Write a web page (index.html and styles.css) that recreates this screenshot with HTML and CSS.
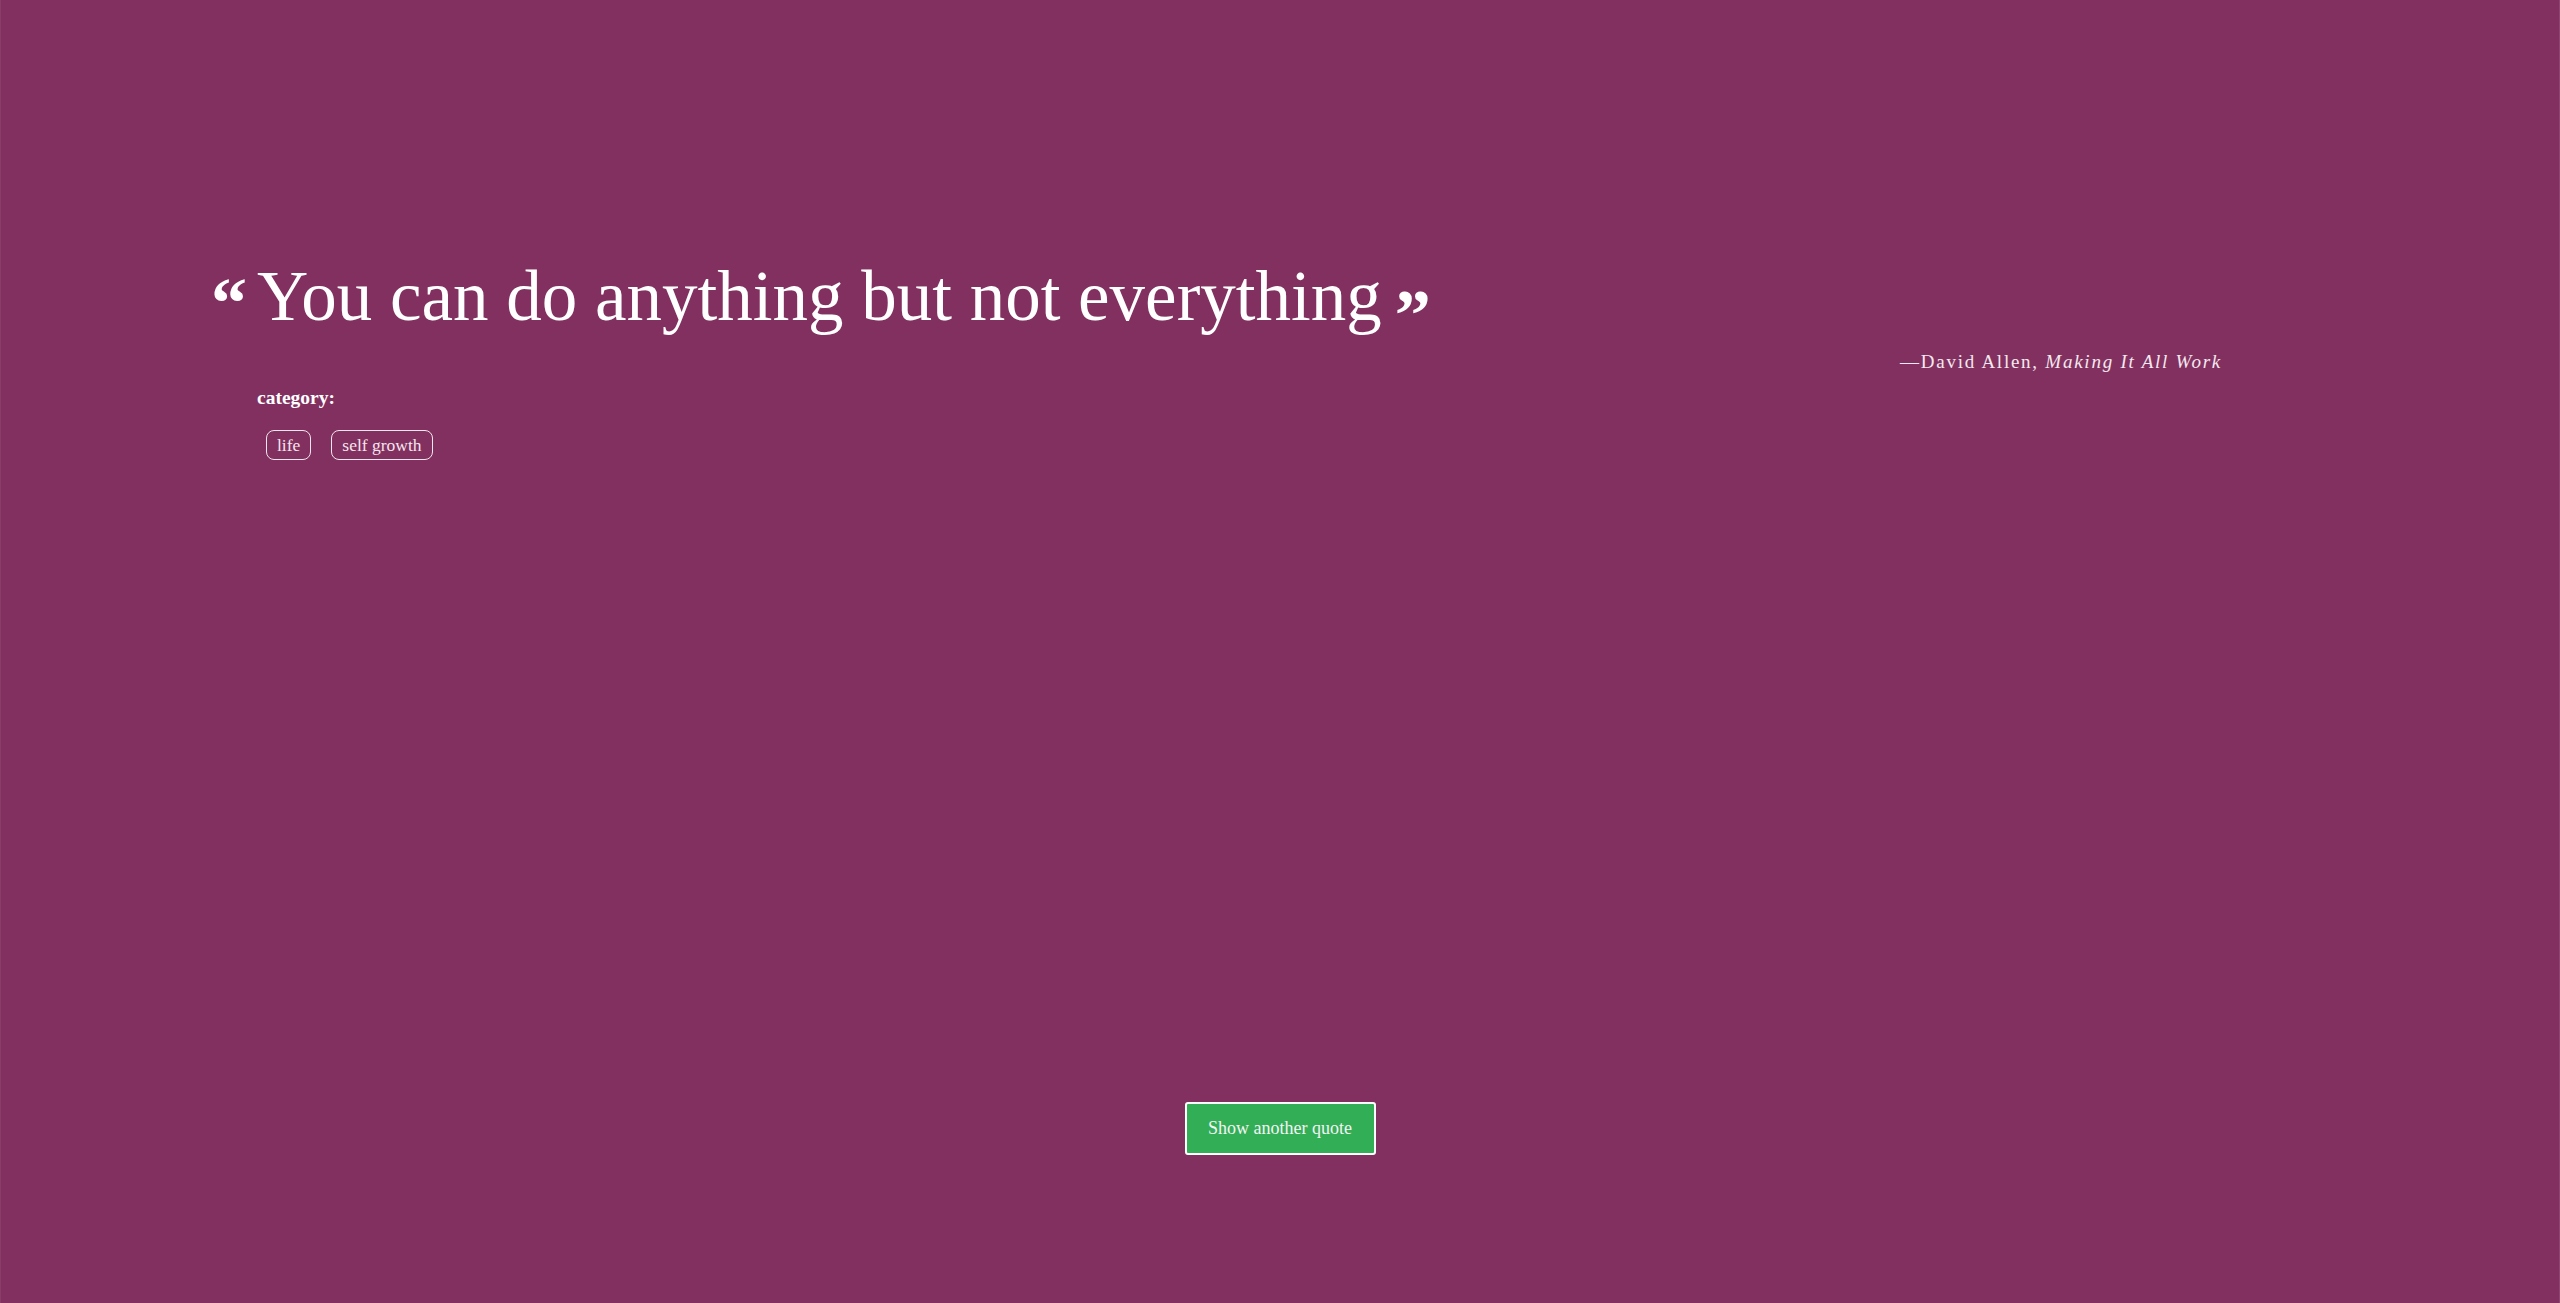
FILE: index.html
```html
<!DOCTYPE html>
<html lang="en">
<head>
<meta charset="utf-8">
<title>Random Quote</title>
<link rel="stylesheet" href="styles.css">
</head>
<body>
<div class="page">
  <main class="quote-box">
    <blockquote class="quote">
      <span class="mark mark-open">“</span><span class="quote-text">You can do anything but not everything</span><span class="mark mark-close">”</span>
    </blockquote>
    <p class="author">—David Allen, <cite>Making It All Work</cite></p>
    <p class="category-label">category:</p>
    <ul class="tags">
      <li class="tag">life</li>
      <li class="tag">self growth</li>
    </ul>
  </main>
  <div class="actions">
    <button class="btn-new" type="button">Show another quote</button>
  </div>
</div>
</body>
</html>
```

FILE: styles.css
```css
html, body {
  margin: 0;
  padding: 0;
}

body {
  background: #82305f;
  color: #ffffff;
  font-family: "Liberation Serif", "Times New Roman", serif;
}

.page {
  box-sizing: border-box;
  min-height: 1303px;
  border-left: 1px solid #8a3d69;
  border-right: 1px solid #8f4571;
  display: flex;
  flex-direction: column;
}

.quote-box {
  width: 1966px;
  margin: 0 0 0 255px;
  padding-top: 254px;
}

.quote {
  margin: 0;
  font-size: 71px;
  line-height: 84px;
  height: 84px;
  white-space: nowrap;
}

.mark {
  position: relative;
  font-weight: 700;
  font-size: 72px;
  line-height: 0;
}

.mark-open {
  margin-left: -45px;
  margin-right: 10px;
  top: 7px;
}

.mark-close {
  margin-left: 13px;
  top: 19px;
}

.author {
  margin: 12px 0 0;
  text-align: right;
  font-size: 19px;
  line-height: 23px;
  letter-spacing: 1.75px;
  color: #f3e9ef;
}

.author cite {
  font-style: italic;
}

.category-label {
  margin: 14px 0 0 1px;
  font-size: 19.5px;
  line-height: 22px;
  font-weight: 700;
}

.tags {
  list-style: none;
  margin: 21px 0 0 10px;
  padding: 0;
  display: flex;
  gap: 20px;
}

.tag {
  border: 1px solid #f4e6ee;
  border-radius: 8px;
  padding: 0 10px;
  font-size: 17.5px;
  line-height: 28px;
  color: #f4e6ee;
}

.actions {
  margin-top: 642px;
  display: flex;
  justify-content: center;
}

.btn-new {
  width: 191px;
  height: 53px;
  box-sizing: border-box;
  background: #32ae57;
  border: 2px solid #ffffff;
  border-radius: 3px;
  color: #f4f4f4;
  font-family: "Liberation Serif", "Times New Roman", serif;
  font-size: 18px;
  padding: 0;
  cursor: pointer;
}
```
